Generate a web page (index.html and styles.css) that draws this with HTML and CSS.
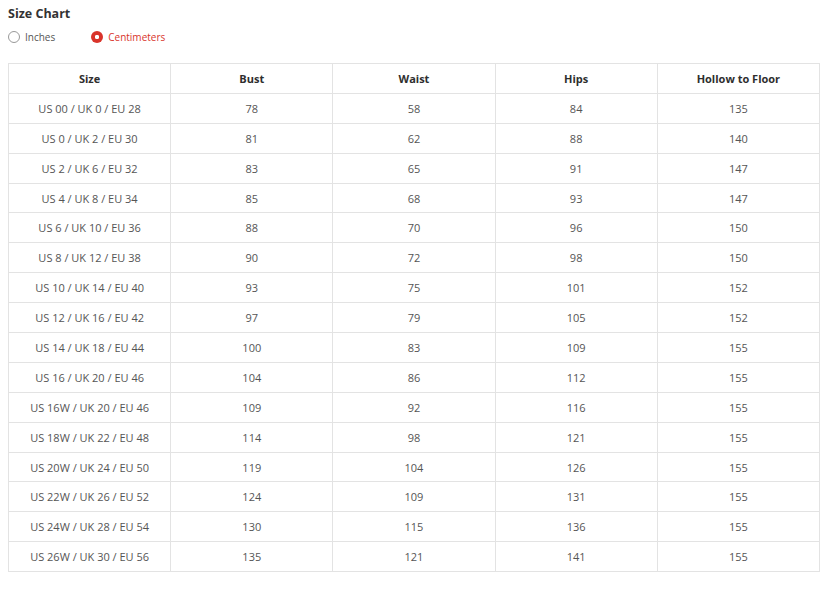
FILE: index.html
```html
<!DOCTYPE html>
<html>
<head>
<meta charset="utf-8">
<link rel="stylesheet" href="styles.css">
</head>
<body>
<h2 class="title">Size Chart</h2>
<div class="units">
  <label class="unit"><span class="radio"></span><span>Inches</span></label>
  <label class="unit active"><span class="radio"></span><span>Centimeters</span></label>
</div>
<table class="chart">
  <thead>
    <tr><th>Size</th><th>Bust</th><th>Waist</th><th>Hips</th><th>Hollow to Floor</th></tr>
  </thead>
  <tbody>
    <tr><td>US 00 / UK 0 / EU 28</td><td>78</td><td>58</td><td>84</td><td>135</td></tr>
    <tr><td>US 0 / UK 2 / EU 30</td><td>81</td><td>62</td><td>88</td><td>140</td></tr>
    <tr><td>US 2 / UK 6 / EU 32</td><td>83</td><td>65</td><td>91</td><td>147</td></tr>
    <tr><td>US 4 / UK 8 / EU 34</td><td>85</td><td>68</td><td>93</td><td>147</td></tr>
    <tr><td>US 6 / UK 10 / EU 36</td><td>88</td><td>70</td><td>96</td><td>150</td></tr>
    <tr><td>US 8 / UK 12 / EU 38</td><td>90</td><td>72</td><td>98</td><td>150</td></tr>
    <tr><td>US 10 / UK 14 / EU 40</td><td>93</td><td>75</td><td>101</td><td>152</td></tr>
    <tr><td>US 12 / UK 16 / EU 42</td><td>97</td><td>79</td><td>105</td><td>152</td></tr>
    <tr><td>US 14 / UK 18 / EU 44</td><td>100</td><td>83</td><td>109</td><td>155</td></tr>
    <tr><td>US 16 / UK 20 / EU 46</td><td>104</td><td>86</td><td>112</td><td>155</td></tr>
    <tr><td>US 16W / UK 20 / EU 46</td><td>109</td><td>92</td><td>116</td><td>155</td></tr>
    <tr><td>US 18W / UK 22 / EU 48</td><td>114</td><td>98</td><td>121</td><td>155</td></tr>
    <tr><td>US 20W / UK 24 / EU 50</td><td>119</td><td>104</td><td>126</td><td>155</td></tr>
    <tr><td>US 22W / UK 26 / EU 52</td><td>124</td><td>109</td><td>131</td><td>155</td></tr>
    <tr><td>US 24W / UK 28 / EU 54</td><td>130</td><td>115</td><td>136</td><td>155</td></tr>
    <tr><td>US 26W / UK 30 / EU 56</td><td>135</td><td>121</td><td>141</td><td>155</td></tr>
  </tbody>
</table>
</body>
</html>
```

FILE: styles.css
```css
html, body {
  background: #fff;
}
body {
  margin: 8px 10px 8px 8px;
  font-family: "Open Sans", "Liberation Sans", sans-serif;
  color: #555;
}
.title {
  margin: 0;
  font-size: 12.5px;
  font-weight: 700;
  color: #333;
  line-height: 12px;
}
.units {
  display: flex;
  align-items: center;
  gap: 36px;
  margin-top: 11px;
  height: 12px;
}
.unit {
  display: flex;
  align-items: center;
  gap: 5px;
  font-size: 10px;
  color: #555;
}
.radio {
  width: 12px;
  height: 12px;
  box-sizing: border-box;
  border: 1px solid #999;
  border-radius: 50%;
  background: #fff;
}
.unit.active {
  color: #d9342b;
}
.unit.active .radio {
  border: none;
  background: radial-gradient(circle closest-side, #fff 0 32%, #d9342b 40%);
}
.chart {
  margin-top: 20px;
  width: 812px;
  table-layout: fixed;
  border-collapse: collapse;
  font-size: 11px;
}
.chart th, .chart td {
  border: 1px solid #e3e3e3;
  height: 28.9px;
  padding: 0;
  text-align: center;
  vertical-align: middle;
}
.chart th {
  font-weight: 700;
  color: #2e2e2e;
}
.chart td {
  color: #555;
}
```
